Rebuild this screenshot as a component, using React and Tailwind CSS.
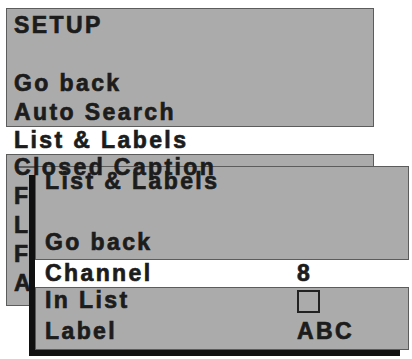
import React from "react"

const font = { fontFamily: '"Liberation Sans", Arial, sans-serif' }

// Menu 1: SETUP
const Row = ({ children, h = "h-[29px] leading-[29px]", className = "" }) => (
  <div className={`${h} whitespace-nowrap ${className}`}>{children}</div>
)

const ValueRow = ({ label, value, h = "h-[30px] leading-[30px]" }) => (
  <div className={`${h} flex whitespace-nowrap`}>
    <span className="w-[252px] shrink-0">{label}</span>
    <span>{value}</span>
  </div>
)

const App = () => {
  return (
    <div
      className="relative w-[412px] h-[359px] bg-white overflow-hidden text-[23px] font-bold tracking-[2.4px] text-[#1c1c1c] [-webkit-text-stroke:0.7px_#1c1c1c]"
      style={font}
    >
      {/* Setup menu */}
      <div className="absolute left-[6px] top-[8px] w-[368px] flex flex-col">
        <div className="bg-[#ababab] border-[1.5px] border-[#5c5c5c] px-[7px] pt-[2px] h-[119px]">
          <Row>SETUP</Row>
          <Row></Row>
          <Row>Go back</Row>
          <Row>Auto Search</Row>
        </div>
        <Row h="h-[27px] leading-[27px]" className="px-[8px]">List &amp; Labels</Row>
        <div className="bg-[#ababab] border-[1.5px] border-[#5c5c5c] px-[7px] h-[152px]">
          <Row className="relative z-20 -mt-[2px]">Closed Caption</Row>
          <Row>Favorites</Row>
          <Row>Language</Row>
          <Row>Factory Reset</Row>
          <Row>About</Row>
        </div>
      </div>

      {/* stray top rule of the sub menu */}
      <div className="absolute left-[15px] top-[166px] w-[22px] h-[1.5px] bg-[#5c5c5c] z-10" />

      {/* Shadow of the sub menu */}
      <div className="absolute left-[29px] top-[175px] w-[371px] h-[181px] bg-[#111] z-10" />

      {/* List & Labels sub menu */}
      <div className="absolute left-[35px] top-[166px] w-[377px] flex flex-col z-10">
        <div className="w-[374px] bg-[#ababab] border-[1.5px] border-[#5c5c5c] px-[9px] h-[94px]">
          <Row h="h-[30px] leading-[30px]" className="-mt-[1px]">List &amp; Labels</Row>
          <Row h="h-[30px] leading-[30px]"></Row>
          <Row h="h-[30px] leading-[30px]" className="mt-[1px]">Go back</Row>
        </div>
        <div className="bg-white px-[10px]">
          <ValueRow label="Channel" value="8" h="h-[27px] leading-[27px]" />
        </div>
        <div className="w-[374px] bg-[#ababab] border-[1.5px] border-[#5c5c5c] px-[9px] h-[63px]">
          <div className="h-[29px] leading-[29px] -mt-[2px] flex whitespace-nowrap">
            <span className="w-[252px] shrink-0">In List</span>
            <span className="mt-[4px] w-[23px] h-[23px] border-2 border-[#222]" />
          </div>
          <ValueRow label="Label" value="ABC" h="h-[33px] leading-[33px]" />
        </div>
      </div>
    </div>
  )
}

export default App
